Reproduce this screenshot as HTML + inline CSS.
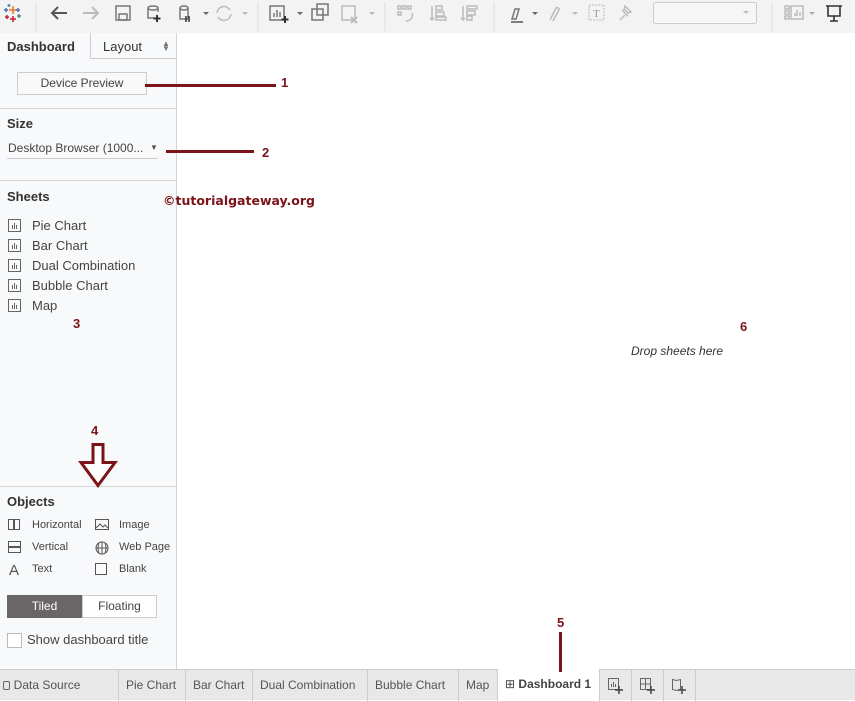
<!DOCTYPE html>
<html><head><meta charset="utf-8"><style>
*{box-sizing:border-box;margin:0;padding:0}
body{width:855px;height:700px;overflow:hidden;font-family:"Liberation Sans",sans-serif;background:#fff;position:relative;color:#333}
.abs{position:absolute}
#tb{left:0;top:0;width:855px;height:33px;background:#f3f3f3}
#lp{left:0;top:33px;width:177px;height:636px;background:#f8f9fa;border-right:1px solid #d4d4d4}
.h{font-weight:bold;font-size:13px;color:#333}
.t{font-size:13px;color:#444}
.s{font-size:11px;color:#444}
.hr{height:1px;background:#d4d4d4;left:0;width:176px}
#bt{left:0;top:669px;width:855px;height:31px;background:#e8e8e8;border-top:1px solid #ccc}
.tab{position:absolute;top:0;height:31px;line-height:30px;font-size:12px;color:#555;border-right:1px solid #ccc;padding-left:7px}
.red{color:#7b1419;font-weight:bold;font-size:13px}
.ln{height:3px;background:#7b1419}
.g{stroke:#777;fill:none;stroke-width:1.5}
.gl{stroke:#bbb;fill:none;stroke-width:1.5}
</style></head><body>
<div id="tb" class="abs">
<svg width="855" height="33" class="abs" style="left:0;top:0">
<g stroke-width="1.5">
<path d="M13 6v8M9 10h8" stroke="#e8762b"/><path d="M6 8v4M4 10h4M18 8v4M16 10h4" stroke="#5b6fae"/><path d="M13 16v6M10 19h6M7 15v4M5 17h4" stroke="#c72035"/><path d="M19 14v4M17 16h4M9 4v3M7.5 5.5h3" stroke="#59879b"/>
</g>
<line x1="36" y1="2" x2="36" y2="31" stroke="#ddd"/>
<path d="M67 13H52M58 7l-6 6 6 6" fill="none" stroke="#555" stroke-width="2"/>
<path d="M98 13H83M92 7l6 6-6 6" fill="none" stroke="#bbb" stroke-width="2"/>
<rect x="116" y="6" width="14" height="14" class="g"/><rect x="119" y="14" width="8" height="6" class="g"/>
<path d="M148 8v10h7M148 8a5 2 0 0 1 10 0v4M148 8a5 2 0 0 0 10 0" class="g"/><path d="M157 15v7M153.5 18.5h7" stroke="#333" stroke-width="2"/>
<path d="M180 8v11h8v-11M180 8a4 2 0 0 1 8 0a4 2 0 0 1-8 0" class="g"/><path d="M186 16v6M189 16v6" stroke="#333" stroke-width="1.5"/>
<path d="M203 12l3 3 3-3z" fill="#666"/>
<path d="M217 13a7 7 0 0 1 13-3M231 14a7 7 0 0 1-13 3" class="gl"/><path d="M242 12l3 3 3-3z" fill="#bbb"/>
<line x1="258" y1="2" x2="258" y2="31" stroke="#ddd"/>
<rect x="270" y="6" width="14" height="14" class="g"/><path d="M274 17v-4M277 17v-7M280 17v-5" class="g"/><path d="M285 16v7M281.5 19.5h7" stroke="#333" stroke-width="2"/>
<path d="M297 12l3 3 3-3z" fill="#666"/>
<rect x="317" y="4" width="11" height="11" class="g"/><rect x="312" y="9" width="11" height="11" class="g" fill="#f3f3f3"/>
<rect x="342" y="6" width="13" height="14" class="gl"/><path d="M351 17l6 6M357 17l-6 6" stroke="#bbb" stroke-width="2"/><path d="M369 12l3 3 3-3z" fill="#bbb"/>
<line x1="385" y1="2" x2="385" y2="31" stroke="#ddd"/>
<g class="gl"><rect x="398" y="6" width="3" height="3"/><rect x="403" y="6" width="3" height="3"/><rect x="408" y="6" width="3" height="3"/><rect x="398" y="12" width="3" height="3"/><path d="M412 13a6 6 0 0 1-6 8"/></g>
<g class="gl"><path d="M432 6v14M430 18l2 2 2-2"/><rect x="436" y="6" width="6" height="4"/><rect x="436" y="12" width="8" height="4"/><rect x="436" y="17" width="10" height="3"/></g>
<g class="gl"><path d="M463 6v14M461 18l2 2 2-2"/><rect x="467" y="6" width="10" height="3"/><rect x="467" y="11" width="8" height="4"/><rect x="467" y="16" width="5" height="4"/></g>
<line x1="494" y1="2" x2="494" y2="31" stroke="#ddd"/>
<path d="M512 19l3-10 4 0-3 10z" class="g"/><line x1="511" y1="22" x2="523" y2="22" stroke="#555" stroke-width="1.5"/><path d="M532 12l3 3 3-3z" fill="#666"/>
<path d="M550 20l6-12a2 2 0 0 1 3 2l-6 11" class="gl"/><path d="M572 12l3 3 3-3z" fill="#bbb"/>
<rect x="589" y="5" width="15" height="15" stroke="#bbb" stroke-dasharray="2 1" fill="none"/><text x="593" y="17" font-size="11" fill="#999" font-family="Liberation Serif">T</text>
<path d="M620 20l5-5M622 10l6 6M625 6l6 6-3 1-4-4z" class="gl"/>
<rect x="653.5" y="2.5" width="103" height="21" rx="2" fill="#f6f6f6" stroke="#ccc"/><path d="M743 11l3 3 3-3z" fill="#bbb"/>
<line x1="772" y1="2" x2="772" y2="31" stroke="#ddd"/>
<g class="gl" stroke="#999"><rect x="785" y="6" width="4" height="3"/><rect x="785" y="11" width="4" height="3"/><rect x="785" y="16" width="4" height="3"/><rect x="791" y="6" width="12" height="13"/><path d="M795 16v-3M797 16v-6M800 16v-4"/></g><path d="M809 12l3 3 3-3z" fill="#aaa"/>
<path d="M826 6h16M828 6v10h12v-10M834 16v5M830 21h8" stroke="#333" stroke-width="1.6" fill="none"/>
</svg>
</div>

<div id="lp" class="abs">
 <div class="abs h" style="left:7px;top:6px">Dashboard</div>
 <div class="abs" style="left:90px;top:0;width:86px;height:26px;border-left:1px solid #ccc;border-bottom:1px solid #ccc"></div>
 <div class="abs t" style="left:103px;top:6px;color:#333">Layout</div>
 <div class="abs" style="left:162px;top:8px;font-size:8px;color:#777;line-height:5px">▲<br>▼</div>
 <div class="abs" style="left:17px;top:39px;width:130px;height:23px;border:1px solid #ccc;background:#f8f8f8;font-size:12px;color:#444;text-align:center;line-height:21px">Device Preview</div>
 <div class="abs hr" style="top:75px"></div>
 <div class="abs h" style="left:7px;top:83px">Size</div>
 <div class="abs" style="left:8px;top:108px;font-size:12px;color:#444">Desktop Browser (1000...</div>
 <div class="abs" style="left:150px;top:110px;font-size:8px;color:#555">▼</div>
 <div class="abs" style="left:7px;top:125px;width:151px;height:1px;background:#ccc"></div>
 <div class="abs hr" style="top:147px"></div>
 <div class="abs h" style="left:7px;top:156px">Sheets</div>
 <svg class="abs" style="left:8px;top:186px" width="14" height="94"><g fill="none" stroke="#666"><rect x="0.5" y="0.5" width="12" height="12"/><rect x="0.5" y="20.5" width="12" height="12"/><rect x="0.5" y="40.5" width="12" height="12"/><rect x="0.5" y="60.5" width="12" height="12"/><rect x="0.5" y="80.5" width="12" height="12"/><path d="M4.5 10V6M6.5 10V4M8.5 10V6M4.5 30v-4M6.5 30v-6M8.5 30v-4M4.5 50v-4M6.5 50v-6M8.5 50v-4M4.5 70v-4M6.5 70v-6M8.5 70v-4M4.5 90v-4M6.5 90v-6M8.5 90v-4"/></g></svg>
 <div class="abs t" style="left:32px;top:183px;line-height:20px">Pie Chart<br>Bar Chart<br>Dual Combination<br>Bubble Chart<br>Map</div>
 <div class="abs hr" style="top:453px"></div>
 <div class="abs h" style="left:7px;top:461px">Objects</div>
 <svg class="abs" style="left:7px;top:485px" width="110" height="60"><g fill="none" stroke="#555"><rect x="1.5" y="1.5" width="5" height="10"/><rect x="7.5" y="1.5" width="5" height="10"/><rect x="1.5" y="23.5" width="12" height="5"/><rect x="1.5" y="29.5" width="12" height="5"/><rect x="88.5" y="1.5" width="13" height="10"/><path d="M89 10l4-4 3 3 2-2 3 3"/><circle cx="95" cy="30" r="6"/><path d="M89 30h12M95 24v12M92 25q-2 5 0 10M98 25q2 5 0 10"/><rect x="88.5" y="45.5" width="11" height="11"/></g><text x="2" y="57" font-size="15" fill="#555" font-family="Liberation Sans">A</text></svg>
 <div class="abs s" style="left:32px;top:481px;line-height:22px">Horizontal<br>Vertical<br>Text</div>
 <div class="abs s" style="left:119px;top:481px;line-height:22px">Image<br>Web Page<br>Blank</div>
 <div class="abs" style="left:7px;top:562px;width:75px;height:23px;background:#6a6566;color:#fff;font-size:12px;text-align:center;line-height:23px">Tiled</div>
 <div class="abs" style="left:82px;top:562px;width:75px;height:23px;border:1px solid #ccc;background:#fff;font-size:12px;text-align:center;line-height:21px;color:#444">Floating</div>
 <div class="abs" style="left:7px;top:600px;width:15px;height:15px;border:1px solid #bbb;background:#fff"></div>
 <div class="abs t" style="left:27px;top:599px">Show dashboard title</div>
</div>

<div class="abs ln" style="left:145px;top:84px;width:131px"></div><div class="abs red" style="left:281px;top:75px">1</div>
<div class="abs ln" style="left:166px;top:150px;width:88px"></div><div class="abs red" style="left:262px;top:145px">2</div>
<div class="abs" style="left:163px;top:193px;color:#7b1419;font-weight:bold;font-size:12.5px;font-family:'DejaVu Sans',sans-serif">©tutorialgateway.org</div>
<div class="abs red" style="left:73px;top:316px">3</div>
<div class="abs red" style="left:91px;top:423px">4</div>
<svg class="abs" style="left:76px;top:443px" width="46" height="45"><path d="M12 1.5h10v18h12l-17 23-17-23h12z" fill="#fff" stroke="#7b1419" stroke-width="3" transform="translate(5 0)"/></svg>
<div class="abs red" style="left:740px;top:319px">6</div>
<div class="abs" style="left:631px;top:344px;font-size:12px;font-style:italic;color:#333">Drop sheets here</div>
<div class="abs red" style="left:557px;top:615px">5</div>
<div class="abs" style="left:559px;top:632px;width:3px;height:40px;background:#7b1419;z-index:2"></div>

<div id="bt" class="abs">
 <div class="tab" style="left:0;width:119px;padding-left:0">&nbsp;<span style="display:inline-block;width:7px;height:9px;border:1px solid #666;border-radius:2px;vertical-align:-1px"></span> Data Source</div>
 <div class="tab" style="left:119px;width:67px">Pie Chart</div>
 <div class="tab" style="left:186px;width:67px">Bar Chart</div>
 <div class="tab" style="left:253px;width:115px">Dual Combination</div>
 <div class="tab" style="left:368px;width:91px">Bubble Chart</div>
 <div class="tab" style="left:459px;width:39px">Map</div>
 <div class="tab" style="left:498px;width:102px;background:#fff;top:-1px;height:32px;color:#444;font-weight:bold"><span style="font-weight:normal">⊞</span> Dashboard 1</div>
 <div class="tab" style="left:600px;width:32px"></div>
 <div class="tab" style="left:632px;width:32px"></div>
 <div class="tab" style="left:664px;width:32px"></div>
 <svg class="abs" style="left:605px;top:6px" width="90" height="20"><g fill="none" stroke="#666"><rect x="3.5" y="2.5" width="10" height="11"/><path d="M6.5 11V8M8.5 11V6M10.5 11V8"/><rect x="35.5" y="2.5" width="10" height="11"/><path d="M35.5 8h10M40.5 2.5v11"/><path d="M67.5 3.5l4 1 4-1v10l-4 1-4-1z"/></g><path d="M14 10v8M10 14h8M46 10v8M42 14h8M77 10v8M73 14h8" stroke="#444" stroke-width="1.5"/></svg>
</div>
</body></html>
